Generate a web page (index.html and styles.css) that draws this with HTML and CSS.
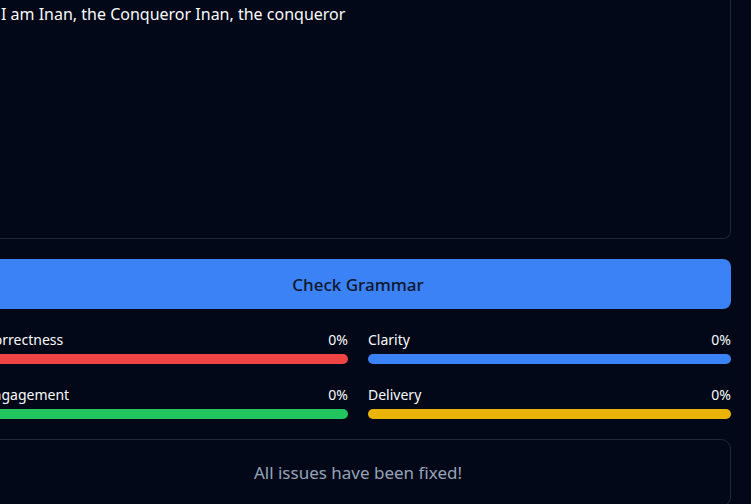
FILE: index.html
```html
<!DOCTYPE html>
<html lang="en">
<head>
<meta charset="utf-8">
<title>Grammar Checker</title>
<link rel="stylesheet" href="styles.css">
</head>
<body>
<main class="checker">
  <textarea class="editor" aria-label="Text to check" spellcheck="false">I am Inan, the Conqueror Inan, the conqueror</textarea>
  <button class="check" type="button">Check Grammar</button>
  <section class="scores">
    <div class="score">
      <div class="score-head"><span>Correctness</span><span>0%</span></div>
      <div class="bar bar-red"></div>
    </div>
    <div class="score">
      <div class="score-head"><span>Clarity</span><span>0%</span></div>
      <div class="bar bar-blue"></div>
    </div>
    <div class="score">
      <div class="score-head"><span>Engagement</span><span>0%</span></div>
      <div class="bar bar-green"></div>
    </div>
    <div class="score">
      <div class="score-head"><span>Delivery</span><span>0%</span></div>
      <div class="bar bar-yellow"></div>
    </div>
  </section>
  <p class="status">All issues have been fixed!</p>
</main>
</body>
</html>
```
FILE: styles.css
```css
* {
  box-sizing: border-box;
}

html {
  background: #ffffff;
}

body {
  margin: 0 3px 0 0;
  height: 100vh;
  overflow: hidden;
  background: #020817;
  color: #f8fafc;
  font-family: "Segoe UI", "Noto Sans", "Open Sans", sans-serif;
}

.checker {
  display: flex;
  flex-direction: column;
  gap: 20px;
  margin: 0 20px 0 -15px;
}

.editor {
  display: block;
  width: 100%;
  height: 239px;
  padding: 0 15px;
  border: 1px solid #1f2937;
  border-top: 0;
  border-radius: 0 0 8px 8px;
  background: transparent;
  color: inherit;
  font: inherit;
  font-size: 16px;
  line-height: 28px;
  resize: none;
  outline: none;
}

.check {
  padding: 12px 20px 10px;
  border: 0;
  border-radius: 8px;
  background: #3b82f6;
  color: #0f172a;
  font: inherit;
  font-size: 17px;
  font-weight: 500;
  line-height: 28px;
}

.scores {
  display: grid;
  grid-template-columns: 1fr 1fr;
  gap: 20px;
}

.score-head {
  display: flex;
  justify-content: space-between;
  font-size: 14px;
  line-height: 22px;
  margin-bottom: 3px;
}

.bar {
  height: 10px;
  border-radius: 5px;
}

.bar-red {
  background: #ef4444;
}

.bar-blue {
  background: #3b82f6;
}

.bar-green {
  background: #22c55e;
}

.bar-yellow {
  background: #eab308;
}

.status {
  margin: 0;
  padding: 20px;
  border: 1px solid #1f2937;
  border-radius: 10px;
  color: #94a3b8;
  font-size: 17px;
  line-height: 26px;
  text-align: center;
}
```
